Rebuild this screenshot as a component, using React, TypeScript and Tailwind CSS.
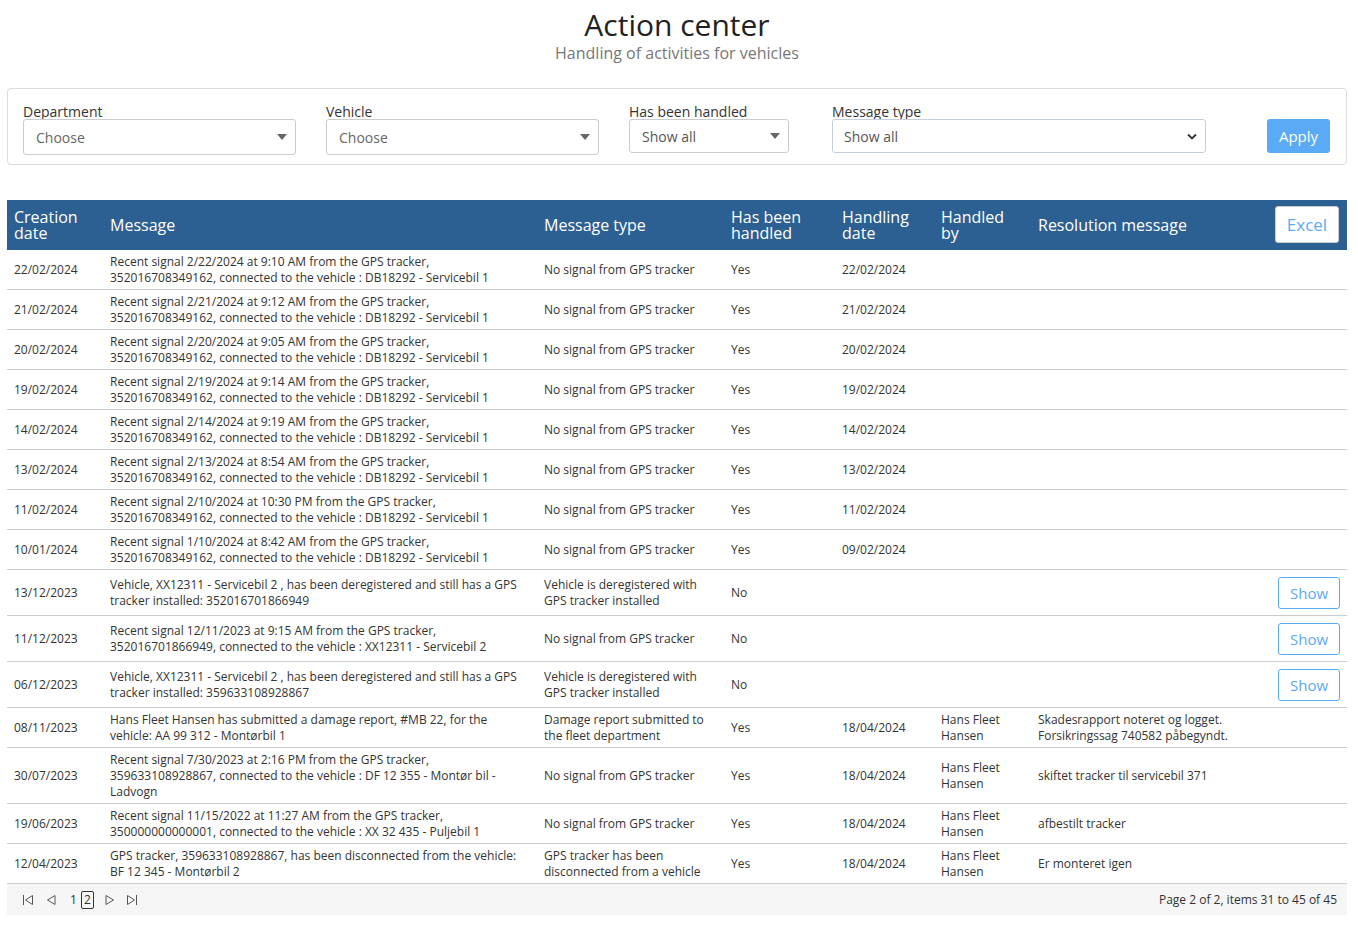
import React from 'react';

type Row = {
  created: string;
  message: string;
  type: string;
  handled: string;
  handledDate?: string;
  by?: string;
  resolution?: string;
  show?: boolean;
};

const gps = (d: string, tracker: string, vehicle: string) =>
  `Recent signal ${d} from the GPS tracker, ${tracker}, connected to the vehicle : ${vehicle}`;

const ROWS: Row[] = [
  { created: '22/02/2024', message: gps('2/22/2024 at 9:10 AM', '352016708349162', 'DB18292 - Servicebil 1'), type: 'No signal from GPS tracker', handled: 'Yes', handledDate: '22/02/2024' },
  { created: '21/02/2024', message: gps('2/21/2024 at 9:12 AM', '352016708349162', 'DB18292 - Servicebil 1'), type: 'No signal from GPS tracker', handled: 'Yes', handledDate: '21/02/2024' },
  { created: '20/02/2024', message: gps('2/20/2024 at 9:05 AM', '352016708349162', 'DB18292 - Servicebil 1'), type: 'No signal from GPS tracker', handled: 'Yes', handledDate: '20/02/2024' },
  { created: '19/02/2024', message: gps('2/19/2024 at 9:14 AM', '352016708349162', 'DB18292 - Servicebil 1'), type: 'No signal from GPS tracker', handled: 'Yes', handledDate: '19/02/2024' },
  { created: '14/02/2024', message: gps('2/14/2024 at 9:19 AM', '352016708349162', 'DB18292 - Servicebil 1'), type: 'No signal from GPS tracker', handled: 'Yes', handledDate: '14/02/2024' },
  { created: '13/02/2024', message: gps('2/13/2024 at 8:54 AM', '352016708349162', 'DB18292 - Servicebil 1'), type: 'No signal from GPS tracker', handled: 'Yes', handledDate: '13/02/2024' },
  { created: '11/02/2024', message: gps('2/10/2024 at 10:30 PM', '352016708349162', 'DB18292 - Servicebil 1'), type: 'No signal from GPS tracker', handled: 'Yes', handledDate: '11/02/2024' },
  { created: '10/01/2024', message: gps('1/10/2024 at 8:42 AM', '352016708349162', 'DB18292 - Servicebil 1'), type: 'No signal from GPS tracker', handled: 'Yes', handledDate: '09/02/2024' },
  { created: '13/12/2023', message: 'Vehicle, XX12311 - Servicebil 2 , has been deregistered and still has a GPS tracker installed: 352016701866949', type: 'Vehicle is deregistered with GPS tracker installed', handled: 'No', show: true },
  { created: '11/12/2023', message: gps('12/11/2023 at 9:15 AM', '352016701866949', 'XX12311 - Servicebil 2'), type: 'No signal from GPS tracker', handled: 'No', show: true },
  { created: '06/12/2023', message: 'Vehicle, XX12311 - Servicebil 2 , has been deregistered and still has a GPS tracker installed: 359633108928867', type: 'Vehicle is deregistered with GPS tracker installed', handled: 'No', show: true },
  { created: '08/11/2023', message: 'Hans Fleet Hansen has submitted a damage report, #MB 22, for the vehicle: AA 99 312 - Montørbil 1', type: 'Damage report submitted to the fleet department', handled: 'Yes', handledDate: '18/04/2024', by: 'Hans Fleet Hansen', resolution: 'Skadesrapport noteret og logget. Forsikringssag 740582 påbegyndt.' },
  { created: '30/07/2023', message: gps('7/30/2023 at 2:16 PM', '359633108928867', 'DF 12 355 - Montør bil - Ladvogn'), type: 'No signal from GPS tracker', handled: 'Yes', handledDate: '18/04/2024', by: 'Hans Fleet Hansen', resolution: 'skiftet tracker til servicebil 371' },
  { created: '19/06/2023', message: gps('11/15/2022 at 11:27 AM', '350000000000001', 'XX 32 435 - Puljebil 1'), type: 'No signal from GPS tracker', handled: 'Yes', handledDate: '18/04/2024', by: 'Hans Fleet Hansen', resolution: 'afbestilt tracker' },
  { created: '12/04/2023', message: 'GPS tracker, 359633108928867, has been disconnected from the vehicle: BF 12 345 - Montørbil 2', type: 'GPS tracker has been disconnected from a vehicle', handled: 'Yes', handledDate: '18/04/2024', by: 'Hans Fleet Hansen', resolution: 'Er monteret igen' },
];

function Caret() {
  return (
    <svg width="10" height="6" viewBox="0 0 10 6" className="flex-none">
      <path d="M0 0h10L5 6z" fill="#666" />
    </svg>
  );
}

function FakeSelect({ label, value, w }: { label: string; value: string; w: string }) {
  return (
    <div className={`flex flex-col ${w}`}>
      <span className="text-[14px] leading-[14px] text-[#333]">{label}</span>
      <div className="flex h-[36px] items-center justify-between rounded-[3px] border border-[#ccc] bg-white pl-[12px] pr-[8px] text-[14px] text-[#666]">
        <span>{value}</span>
        <Caret />
      </div>
    </div>
  );
}

function Header({ top, bottom }: { top: string; bottom?: string }) {
  return (
    <div className="text-[16px] leading-[16px] text-white">
      {top}
      {bottom && <br />}
      {bottom}
    </div>
  );
}

const COLS = ['w-[96px]', 'w-[434px]', 'w-[187px]', 'w-[111px]', 'w-[99px]', 'w-[97px]', 'w-[239px]', 'flex-1'];

export default function App() {
  return (
    <div className="min-h-[926px] bg-white pl-[7px] pr-[11px] font-['Open_Sans',sans-serif] text-[#333]">
      <div className="flex flex-col items-center pt-[6px]">
        <h1 className="text-[30px] leading-[37px] text-[#222]">Action center</h1>
        <p className="text-[16px] leading-[20px] text-[#777]">Handling of activities for vehicles</p>
      </div>

      <div className="mt-[25px] flex h-[77px] items-start rounded-[4px] border border-[#ddd] px-[15px] pt-[16px]">
        <FakeSelect label="Department" value="Choose" w="w-[273px]" />
        <div className="w-[30px]" />
        <FakeSelect label="Vehicle" value="Choose" w="w-[273px]" />
        <div className="w-[30px]" />
        <div className="flex w-[160px] flex-col">
          <span className="text-[14px] leading-[14px] text-[#333]">Has been handled</span>
          <div className="flex h-[34px] items-center justify-between rounded-[3px] border border-[#ccc] bg-white pl-[12px] pr-[8px] text-[14px] text-[#555]">
            <span>Show all</span>
            <Caret />
          </div>
        </div>
        <div className="w-[43px]" />
        <div className="flex w-[374px] flex-col">
          <span className="text-[14px] leading-[14px] text-[#333]">Message type</span>
          <div className="flex h-[34px] items-center justify-between rounded-[3px] border border-[#c5cfdc] bg-white pl-[11px] pr-[8px] text-[14px] text-[#555]">
            <span>Show all</span>
            <svg width="10" height="7" viewBox="0 0 10 7">
              <path d="M1 1.5l4 4 4-4" stroke="#333" strokeWidth="1.8" fill="none" />
            </svg>
          </div>
        </div>
        <div className="flex-1" />
        <button className="mr-[1px] mt-[14px] h-[34px] w-[63px] rounded-[3px] bg-[#5aaaf6] text-[15px] text-white">Apply</button>
      </div>

      <div className="mt-[35px]">
        <div className="flex h-[50px] items-center bg-[#2d6092] pb-[1px]">
          <div className={`${COLS[0]} pl-[7px]`}><Header top="Creation" bottom="date" /></div>
          <div className={`${COLS[1]} pl-[7px]`}><Header top="Message" /></div>
          <div className={`${COLS[2]} pl-[7px]`}><Header top="Message type" /></div>
          <div className={`${COLS[3]} pl-[7px]`}><Header top="Has been" bottom="handled" /></div>
          <div className={`${COLS[4]} pl-[7px]`}><Header top="Handling" bottom="date" /></div>
          <div className={`${COLS[5]} pl-[7px]`}><Header top="Handled" bottom="by" /></div>
          <div className={`${COLS[6]} pl-[7px]`}><Header top="Resolution message" /></div>
          <div className="flex flex-1 justify-end pr-[8px]">
            <button className="h-[37px] w-[64px] rounded-[3px] border border-[#ccc] bg-white text-[17px] text-[#5aaaf6]">Excel</button>
          </div>
        </div>

        {ROWS.map((r) => (
          <div key={r.created + r.message} className="flex items-center border-b border-[#ccc] pb-[3px] pt-[4px] text-[12px] leading-[16px] text-[#333]">
            <div className={`${COLS[0]} pl-[7px]`}>{r.created}</div>
            <div className={`${COLS[1]} pl-[7px] pr-[10px]`}>{r.message}</div>
            <div className={`${COLS[2]} pl-[7px] pr-[14px]`}>{r.type}</div>
            <div className={`${COLS[3]} pl-[7px]`}>{r.handled}</div>
            <div className={`${COLS[4]} pl-[7px]`}>{r.handledDate}</div>
            <div className={`${COLS[5]} pl-[7px] pr-[20px]`}>{r.by}</div>
            <div className={`${COLS[6]} pl-[7px]`}>{r.resolution}</div>
            <div className="flex flex-1 justify-end pr-[7px]">
              {r.show && (
                <button className="my-[3px] h-[32px] w-[62px] rounded-[3px] border border-[#5aaaf6] bg-white text-[15px] text-[#5aaaf6]">Show</button>
              )}
            </div>
          </div>
        ))}

        <div className="flex h-[31px] items-center justify-between bg-[#f6f6f6] pl-[15px] pr-[10px] text-[12px] text-[#333]">
          <div className="flex items-center">
            <svg width="12" height="12" viewBox="0 0 12 12">
              <path d="M1.5 1v10M10.5 1.5v9L3.5 6z" stroke="#555" strokeWidth="1" fill="none" />
            </svg>
            <svg width="12" height="12" viewBox="0 0 12 12" className="ml-[11px]">
              <path d="M10 1.5v9L2.5 6z" stroke="#555" strokeWidth="1" fill="none" />
            </svg>
            <span className="ml-[13px]">1</span>
            <span className="ml-[4px] flex h-[18px] w-[13px] items-center justify-center rounded-[2px] border border-[#333]">2</span>
            <svg width="12" height="12" viewBox="0 0 12 12" className="ml-[10px]">
              <path d="M2 1.5v9L9.5 6z" stroke="#555" strokeWidth="1" fill="none" />
            </svg>
            <svg width="12" height="12" viewBox="0 0 12 12" className="ml-[10px]">
              <path d="M10.5 1v10M1.5 1.5v9L8.5 6z" stroke="#555" strokeWidth="1" fill="none" />
            </svg>
          </div>
          <span>Page 2 of 2, items 31 to 45 of 45</span>
        </div>
      </div>
    </div>
  );
}
